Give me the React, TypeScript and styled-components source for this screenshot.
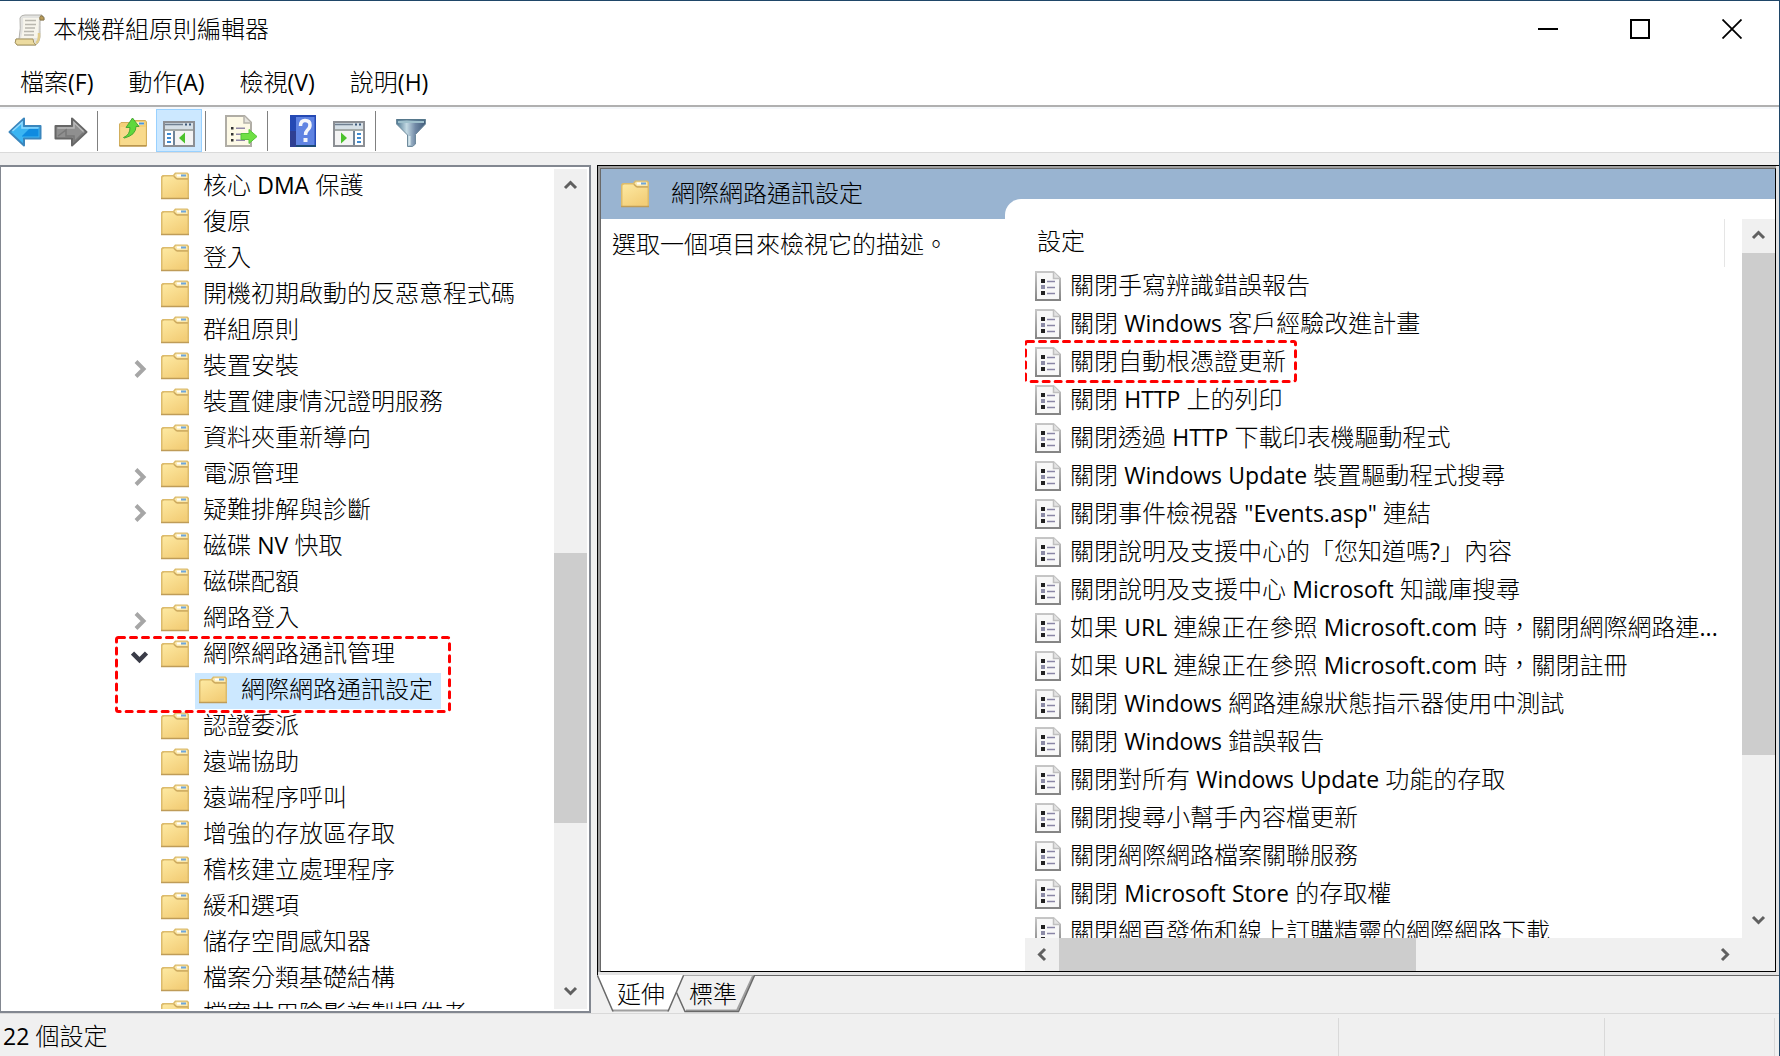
import React from "react";
import styled, { createGlobalStyle, css } from "styled-components";

const Global = createGlobalStyle`
  * { box-sizing: border-box; }
  html, body, #root { height: 100%; }
  body {
    margin: 0;
    font-family: "Open Sans", "Noto Sans CJK TC", sans-serif;
    font-size: 24px;
    line-height: 36px;
    color: #000;
    background: #fff;
    overflow: hidden;
  }
  button {
    font: inherit;
    color: inherit;
    background: none;
    border: 0;
    padding: 0;
    margin: 0;
  }
  ul { list-style: none; margin: 0; padding: 0; }
  h1, h2, p { margin: 0; font: inherit; }
  svg { display: block; flex: none; }
`;

const Window = styled.div`
  height: 100vh;
  display: flex;
  flex-direction: column;
  background: #f0f0f0;
  border-top: 1px solid #1f4668;
  border-right: 1px solid #1f4668;
  font-weight: 300;
`;

const Label = styled.span`
  display: block;
  padding-bottom: 2px;
  white-space: nowrap;
`;

const Latin = styled.span`
  font-size: 23px;
  font-weight: 400;
  line-height: 1;
`;

const TitleBar = styled.header`
  display: flex;
  align-items: center;
  height: 58px;
  padding-left: 14px;
  background: #fff;
`;

const Title = styled.h1`
  flex: 1;
  padding-left: 7px;
`;

const WindowButton = styled.button`
  display: flex;
  align-items: center;
  justify-content: center;
  width: 92px;
  height: 58px;
  padding: 0 3px 2px 0;
`;

const MenuBar = styled.nav`
  display: flex;
  gap: 35px;
  height: 48px;
  padding: 5px 20px 0;
  background: #fff;
  border-bottom: 2px solid #b0b0b0;
`;

const MenuButton = styled.button`
  height: 36px;
`;

const ToolBar = styled.div`
  display: flex;
  align-items: center;
  height: 46px;
  padding-left: 2px;
  background: #fff;
  border-top: 2px solid #f5f8fb;
  border-bottom: 1px solid #dadada;
`;

const ToolButton = styled.button<{ $on?: boolean }>`
  display: flex;
  align-items: flex-end;
  justify-content: center;
  width: 46px;
  height: 43px;
  padding-bottom: 4px;
  border: 1px solid ${(p) => (p.$on ? "#99d1ff" : "transparent")};
  background: ${(p) => (p.$on ? "#cce8ff" : "transparent")};
`;

const ToolSeparator = styled.span`
  width: 1px;
  height: 40px;
  margin: 0 12px 0 3px;
  background: #808080;
`;

const Body = styled.main`
  flex: 1;
  min-height: 0;
  display: grid;
  grid-template-columns: 591px minmax(0, 1fr);
  column-gap: 6px;
  padding-top: 12px;
`;

const TreePane = styled.section`
  display: flex;
  min-height: 0;
  padding: 2px 2px 2px 0;
  background: #fff;
  border: 2px solid #828790;
  border-left-width: 1px;
`;

const TreeList = styled.ul`
  flex: 1;
  min-width: 0;
  overflow: hidden;
`;

const TreeRow = styled.li<{ $child?: boolean }>`
  position: relative;
  display: flex;
  height: 36px;
  padding-left: ${(p) => (p.$child ? 194 : 116)}px;
`;

const Twisty = styled.span`
  display: flex;
  align-items: center;
  justify-content: center;
  width: 44px;
  height: 40px;
  padding-left: 1px;
`;

const TreeItem = styled.button<{ $selected?: boolean }>`
  display: flex;
  align-items: center;
  gap: 14px;
  height: 36px;
  padding-bottom: 2px;
  ${(p) =>
    p.$selected &&
    css`
      padding: 0 8px 2px 4px;
      background: #cce8ff;
    `}
`;

const Highlight = styled.svg<{ $place: "tree" | "list" }>`
  position: absolute;
  z-index: 2;
  pointer-events: none;
  overflow: visible;
  ${(p) =>
    p.$place === "tree"
      ? css`
          left: 114px;
          top: -1px;
          width: 333px;
          height: 74px;
        `
      : css`
          left: -1px;
          top: -3px;
          width: 270px;
          height: 40px;
        `}
`;

const DetailSide = styled.section`
  display: flex;
  flex-direction: column;
  min-width: 0;
  min-height: 0;
`;

const DetailFrame = styled.div`
  flex: 1;
  min-height: 0;
  display: flex;
  border: 1px solid #000;
  border-width: 1px 0 0 1px;
  background: #e3e3e3;
  padding: 0 3px 3px 0;
`;

const DetailInner = styled.div`
  flex: 1;
  min-width: 0;
  display: flex;
  border-style: solid;
  border-width: 2px 0 0 2px;
  border-color: #a0a0a0;
`;

const DetailContent = styled.div`
  flex: 1;
  min-width: 0;
  display: grid;
  grid-template-columns: 424px minmax(0, 1fr);
  grid-template-rows: minmax(0, 1fr);
  background: #fff;
  border: 1px solid;
  border-color: #696969 #000 #000 #696969;
`;

const Description = styled.div`
  display: flex;
  flex-direction: column;
`;

const Banner = styled.div`
  display: flex;
  align-items: center;
  gap: 22px;
  height: 50px;
  margin-right: 20px;
  padding-left: 20px;
  background: #99b4d1;
`;

const DescriptionText = styled.p`
  padding: 7px 11px;
`;

const ListSide = styled.div`
  display: flex;
  flex-direction: column;
  min-height: 0;
`;

const BannerStrip = styled.div`
  flex: none;
  height: 50px;
  margin-left: -20px;
  background: #99b4d1;
  padding-top: 30px;

  &::after {
    content: "";
    display: block;
    height: 20px;
    background: #fff;
    border-top-left-radius: 16px;
  }
`;

const ListScroll = styled.div`
  flex: 1;
  min-height: 0;
  display: grid;
  grid-template-columns: minmax(0, 1fr) 33px;
  grid-template-rows: minmax(0, 1fr) 33px;
`;

const ListView = styled.div`
  overflow: hidden;
`;

const ColumnHeader = styled.div`
  width: 700px;
  height: 48px;
  padding: 4px 12px;
  border-right: 1px solid #e5e5e5;
`;

const SettingRow = styled.li`
  position: relative;
  display: flex;
  height: 38px;
  padding-left: 10px;
`;

const SettingItem = styled.button`
  display: flex;
  align-items: center;
  gap: 9px;
`;

const VBar = styled.div`
  display: flex;
  flex-direction: column;
  width: 33px;
  background: #f0f0f0;
`;

const HBar = styled.div`
  grid-column: 1 / -1;
  display: flex;
  padding: 0 33px 0 1px;
  background: #f0f0f0;
`;

const ScrollButton = styled.button`
  flex: none;
  display: flex;
  align-items: center;
  justify-content: center;
  width: 33px;
  height: 34px;
  padding: 0 2px 2px 0;
`;

const Track = styled.div<{ $dir: "row" | "column" }>`
  flex: 1;
  min-height: 0;
  display: flex;
  flex-direction: ${(p) => p.$dir};
`;

const Space = styled.span<{ $size: number }>`
  flex: ${(p) => p.$size} 0 0;
`;

const Thumb = styled(Space)`
  background: #cdcdcd;
`;

const Tabs = styled.div`
  position: relative;
  flex: none;
  display: flex;
  height: 38px;
  border-top: 1px solid #696969;
  background: #f0f0f0;
`;

const TabShapes = styled.svg`
  position: absolute;
  left: 0;
  top: -1px;
`;

const Tab = styled.button`
  position: relative;
  width: 72px;
  height: 36px;
  padding-left: 16px;
`;

const StatusBar = styled.footer`
  display: flex;
  height: 43px;
  padding: 4px 4px 0 0;
  border-top: 1px solid #d9d9d9;
`;

const StatusCell = styled.div<{ $width?: number }>`
  flex: ${(p) => (p.$width ? `0 0 ${p.$width}px` : "1")};
  padding-left: 3px;
  border-right: 1px solid #d9d9d9;
`;

/* Runs of Latin letters and digits are set a little smaller and heavier than the Han text. */
function Mixed({ text }: { text: string }) {
  return (
    <Label>
      {text.split(/([\x21-\x7e]+)/).map((part, i) => (i % 2 ? <Latin key={i}>{part}</Latin> : part))}
    </Label>
  );
}

function FolderIcon() {
  return (
    <svg width="28" height="28" viewBox="0 0 28 28" aria-hidden="true">
      <defs>
        <linearGradient id="folder" x1="0" y1="0" x2="0.6" y2="1">
          <stop offset="0" stopColor="#fde9a2" />
          <stop offset="1" stopColor="#f3ce78" />
        </linearGradient>
      </defs>
      <path d="M0 27V4.500L1.500 3H12L14 .5H26.500L28 2V27Z" fill="#dcbb6c" />
      <path d="M1.500 26V5.500L3 4.500H12L15 7.500H26.500V26Z" fill="url(#folder)" />
      <path d="M13.500 3.500L15 1.800H25.500L26.500 2.800V6H16Z" fill="#fbe9ae" />
      <path d="M16 2.500H20V4.500H16Z" fill="#fff" />
      <path d="M20 2.500H25V4.500H20Z" fill="#6ea6dc" />
      <path d="M13 4.500L16 7H27" fill="none" stroke="#c9a55c" />
      <path d="M0 26.500H28" stroke="#bf9c58" strokeWidth="1.500" />
    </svg>
  );
}

function SettingIcon() {
  return (
    <svg width="26" height="30" viewBox="0 0 26 30" aria-hidden="true">
      <defs>
        <linearGradient id="edge" x1="0" y1="0" x2="0" y2="1">
          <stop offset="0" stopColor="#c6c6c6" />
          <stop offset="1" stopColor="#858585" />
        </linearGradient>
      </defs>
      <path d="M1 1H18.500L25 7.500V29H1Z" fill="#f8f8f8" stroke="url(#edge)" strokeWidth="2" />
      <path d="M18.500 1V7.500H25" fill="#e4e4e4" stroke="#c0c0c0" strokeWidth="1.500" />
      <path d="M6 8h4v4H6zM6 20h4v4H6z" fill="#222" />
      <path d="M6 14h4v4H6z" fill="#8c8ca6" />
      <path d="M12 10.500h8M12 16.500h8M12 22.500h8" stroke="#8a86a6" strokeWidth="1.500" />
    </svg>
  );
}

function Chevron({ dir }: { dir: "up" | "down" | "left" | "right" }) {
  const d = {
    up: "M4 12L9.500 6.500L15 12",
    down: "M4 6L9.500 11.500L15 6",
    left: "M12 4L6.500 9.500L12 15",
    right: "M6 4L11.500 9.500L6 15",
  }[dir];
  return (
    <svg width="18" height="18" viewBox="0 0 18 18" aria-hidden="true">
      <path d={d} fill="none" stroke="#606060" strokeWidth="3" />
    </svg>
  );
}

function TreeTwisty({ open }: { open: boolean }) {
  return (
    <svg width="18" height="18" viewBox="0 0 18 18" aria-hidden="true">
      {open ? (
        <path d="M1.500 5L8.500 12L15.500 5" fill="none" stroke="#3a3c48" strokeWidth="4.500" />
      ) : (
        <path d="M5 1.500L12.500 9L5 16.500" fill="none" stroke="#a6a6a6" strokeWidth="4" />
      )}
    </svg>
  );
}

function Dashed({ place }: { place: "tree" | "list" }) {
  return (
    <Highlight $place={place} aria-hidden="true">
      <rect x="1.5" y="1.5" width="100%" height="100%" rx="2" fill="none" stroke="#ff0000" strokeWidth="3" strokeDasharray="6 6" strokeLinecap="round" />
    </Highlight>
  );
}

function ScrollIcon() {
  return (
    <svg width="32" height="32" viewBox="0 0 32 32" aria-hidden="true">
      <path d="M6 4Q7 1 11 1H28Q31 3 30 6H26Q26 18 26 23Q25 30 21 31H3Q0 29 2 25H5Q7 14 6 4Z" fill="#e3e3e0" stroke="#b4b3ae" />
      <path d="M9 4H25Q24 15 24 24H7Q10 13 9 4Z" fill="#f7f5ec" />
      <path d="M2 25H19Q19 29 22 31H3Q0 29 2 25Z" fill="#ecdba0" stroke="#a3925c" />
      <path d="M27 1.500Q31 3 30 6H26Q25 3 27 1.500Z" fill="#b99b57" stroke="#8d7a4d" />
      <path d="M11 6.500h11M11 10.500h11M11 14h10M10 17.500h10M10 21h10" stroke="#b9b7ae" strokeWidth="1.500" />
      <path d="M22 29Q25.500 27 25 19" stroke="#e0cc8c" strokeWidth="2.500" fill="none" />
    </svg>
  );
}

function ArrowIcon({ back }: { back?: boolean }) {
  return back ? (
    <svg width="34" height="30" viewBox="0 0 34 30" aria-hidden="true">
      <path d="M1.500 15L16 1.500V9H32.500V21.500H16V28.500Z" fill="#3ab5f2" stroke="#3a86bd" strokeWidth="2" strokeLinejoin="round" />
      <path d="M14 19L22 11H30.500V19.500H14Z" fill="#0e8be0" />
      <path d="M4.500 14L14 5.500V11H30.500" fill="none" stroke="#8edaff" strokeWidth="1.500" />
    </svg>
  ) : (
    <svg width="34" height="30" viewBox="0 0 34 30" aria-hidden="true">
      <path d="M32.500 15L18 1.500V9H1.500V21.500H18V28.500Z" fill="#8f8f8f" stroke="#666" strokeWidth="2" strokeLinejoin="round" />
      <path d="M3.500 11H20V5.500L29.500 14.500" fill="none" stroke="#b9b9b9" strokeWidth="1.500" />
      <path d="M4 19L12 13V19H20V25L29 16" fill="none" stroke="#777" strokeWidth="1.500" />
    </svg>
  );
}

function UpFolderIcon() {
  return (
    <svg width="28" height="30" viewBox="0 0 28 30" aria-hidden="true">
      <path d="M.5 29V7L2 5.500H12L14 3.500H26.500L27.500 5V29Z" fill="#f3cf78" stroke="#d2ae5c" />
      <path d="M1.500 28V10H26.500V28Z" fill="#f8da8c" />
      <path d="M17 5h8v3h-8z" fill="#fff3c8" />
      <path d="M20 5.500h5v2h-5z" fill="#4a94dc" />
      <path d="M.5 28.800H27.500" stroke="#b8944c" strokeWidth="1.500" />
      <path d="M4.500 20.500Q11 18 11 10.500H7L13.500 1L20 9.500H17Q17 18 5.500 21Z" fill="#5fd83c" stroke="#48a832" />
    </svg>
  );
}

function PaneIcon({ flip }: { flip?: boolean }) {
  return (
    <svg width="32" height="26" viewBox="0 0 32 26" aria-hidden="true">
      <path d="M1 1H31V25H1Z" fill="#f4f4f4" stroke="#8c8f94" strokeWidth="2" />
      <path d="M2 2H30V8H2Z" fill="#d5dfe6" />
      <path d="M2 3.500H20" stroke="#6f7f90" strokeWidth="1.500" />
      <path d="M22 3.500h2M26 3.500h2" stroke="#3d5a7c" strokeWidth="2" />
      <path d="M2 9H30" stroke="#a4aaa8" strokeWidth="2" />
      {flip ? (
        <>
          <path d="M22 10H30V24H22Z" fill="#fff" />
          <path d="M21 10V24" stroke="#6f8498" strokeWidth="2" />
          <path d="M24 13h4M24 17h4M24 21h4" stroke="#3f8bd0" strokeWidth="2" />
          <path d="M8 11.500L14 17L8 22.500Z" fill="#4bc22c" />
        </>
      ) : (
        <>
          <path d="M2 10H10V24H2Z" fill="#fff" />
          <path d="M11 10V24" stroke="#6f8498" strokeWidth="2" />
          <path d="M4 13h4M4 17h4M4 21h4" stroke="#3f8bd0" strokeWidth="2" />
          <path d="M22 11.500L16 17L22 22.500Z" fill="#4bc22c" />
        </>
      )}
    </svg>
  );
}

function ExportIcon() {
  return (
    <svg width="33" height="32" viewBox="0 0 33 32" aria-hidden="true">
      <path d="M1 1H19.500L26 7.500V31H1Z" fill="#fdf9e6" stroke="#b0ada5" strokeWidth="2" />
      <path d="M19 1V8H26" fill="#e4e2dc" stroke="#b5b2ab" strokeWidth="1.500" />
      <path d="M6 12h2.500v2.500H6zM6 18h2.500v2.500H6zM6 24h2.500v2.500H6z" fill="#333" />
      <path d="M11 13.200h9M11 19.200h5M11 25.200h9" stroke="#9088a6" strokeWidth="1.500" />
      <path d="M16 18.500H24V14.500L32 21.500L24 28.500V24.500H16Z" fill="#6fe044" stroke="#55c43a" />
    </svg>
  );
}

function HelpIcon() {
  return (
    <svg width="26" height="32" viewBox="0 0 26 32" aria-hidden="true">
      <path d="M0 0H26V32H0Z" fill="#2549b4" />
      <path d="M6 2H24.500V30H6Z" fill="#5f83e2" />
      <path d="M0 16H6V32H0Z" fill="#2f3f92" />
      <path d="M6 30H26V32H6Z" fill="#1d4c78" />
      <path d="M10.500 11Q10.500 5.500 15 5.500Q20 5.500 20 10Q20 13 17.500 15Q15.500 17 15.500 20" fill="none" stroke="#f4f6fb" strokeWidth="3.500" />
      <path d="M13.500 23h4v4h-4z" fill="#f4f6fb" />
    </svg>
  );
}

function FilterIcon() {
  return (
    <svg width="30" height="28" viewBox="0 0 30 28" aria-hidden="true">
      <defs>
        <linearGradient id="funnel" x1="0" y1="0" x2="1" y2="0">
          <stop offset="0" stopColor="#4b7590" />
          <stop offset="0.35" stopColor="#c4dae4" />
          <stop offset="0.65" stopColor="#7189a6" />
          <stop offset="1" stopColor="#3f5a78" />
        </linearGradient>
      </defs>
      <path d="M.5 .5H29.500V5L19.500 15.500V25L16.500 27.500H11.500V16L.5 5Z" fill="url(#funnel)" stroke="#6f8b9c" />
      <path d="M2 3H28" stroke="#9fc0cc" strokeWidth="2" />
      <path d="M.5 .8H29.500" stroke="#55788c" strokeWidth="1.500" />
      <path d="M13.500 17V26" stroke="#d5e6ec" strokeWidth="2" />
    </svg>
  );
}

type Node = { name: string; state?: "closed" | "open"; child?: boolean };

const nodes: Node[] = [
  { name: "核心 DMA 保護" },
  { name: "復原" },
  { name: "登入" },
  { name: "開機初期啟動的反惡意程式碼" },
  { name: "群組原則" },
  { name: "裝置安裝", state: "closed" },
  { name: "裝置健康情況證明服務" },
  { name: "資料夾重新導向" },
  { name: "電源管理", state: "closed" },
  { name: "疑難排解與診斷", state: "closed" },
  { name: "磁碟 NV 快取" },
  { name: "磁碟配額" },
  { name: "網路登入", state: "closed" },
  { name: "網際網路通訊管理", state: "open" },
  { name: "網際網路通訊設定", child: true },
  { name: "認證委派" },
  { name: "遠端協助" },
  { name: "遠端程序呼叫" },
  { name: "增強的存放區存取" },
  { name: "稽核建立處理程序" },
  { name: "緩和選項" },
  { name: "儲存空間感知器" },
  { name: "檔案分類基礎結構" },
  { name: "檔案共用陰影複製提供者" },
];

const settings = [
  "關閉手寫辨識錯誤報告",
  "關閉 Windows 客戶經驗改進計畫",
  "關閉自動根憑證更新",
  "關閉 HTTP 上的列印",
  "關閉透過 HTTP 下載印表機驅動程式",
  "關閉 Windows Update 裝置驅動程式搜尋",
  "關閉事件檢視器 \"Events.asp\" 連結",
  "關閉說明及支援中心的「您知道嗎?」內容",
  "關閉說明及支援中心 Microsoft 知識庫搜尋",
  "如果 URL 連線正在參照 Microsoft.com 時，關閉網際網路連...",
  "如果 URL 連線正在參照 Microsoft.com 時，關閉註冊",
  "關閉 Windows 網路連線狀態指示器使用中測試",
  "關閉 Windows 錯誤報告",
  "關閉對所有 Windows Update 功能的存取",
  "關閉搜尋小幫手內容檔更新",
  "關閉網際網路檔案關聯服務",
  "關閉 Microsoft Store 的存取權",
  "關閉網頁發佈和線上訂購精靈的網際網路下載",
];

export default function App() {
  return (
    <Window lang="zh-Hant">
      <Global />
      <TitleBar>
        <ScrollIcon />
        <Title><Mixed text="本機群組原則編輯器" /></Title>
        <WindowButton aria-label="最小化">
          <svg width="20" height="20" viewBox="0 0 20 20"><path d="M0 10H20" stroke="#000" strokeWidth="2" /></svg>
        </WindowButton>
        <WindowButton aria-label="最大化">
          <svg width="20" height="20" viewBox="0 0 20 20"><path d="M1 1H19V19H1Z" fill="none" stroke="#000" strokeWidth="2" /></svg>
        </WindowButton>
        <WindowButton aria-label="關閉">
          <svg width="20" height="20" viewBox="0 0 20 20"><path d="M.5 .5L19.500 19.500M19.500 .5L.5 19.500" stroke="#000" strokeWidth="1.800" /></svg>
        </WindowButton>
      </TitleBar>
      <MenuBar>
        {["檔案(F)", "動作(A)", "檢視(V)", "說明(H)"].map((m) => (
          <MenuButton key={m}><Mixed text={m} /></MenuButton>
        ))}
      </MenuBar>
      <ToolBar>
        <ToolButton aria-label="上一頁"><ArrowIcon back /></ToolButton>
        <ToolButton aria-label="下一頁"><ArrowIcon /></ToolButton>
        <ToolSeparator />
        <ToolButton aria-label="上一層"><UpFolderIcon /></ToolButton>
        <ToolButton $on aria-label="顯示樹狀目錄"><PaneIcon /></ToolButton>
        <ToolSeparator />
        <ToolButton aria-label="匯出清單"><ExportIcon /></ToolButton>
        <ToolSeparator />
        <ToolButton aria-label="說明"><HelpIcon /></ToolButton>
        <ToolButton aria-label="顯示動作窗格"><PaneIcon flip /></ToolButton>
        <ToolSeparator />
        <ToolButton aria-label="篩選"><FilterIcon /></ToolButton>
      </ToolBar>
      <Body>
        <TreePane>
          <TreeList>
            {nodes.map((n) => (
              <TreeRow key={n.name} $child={n.child}>
                {!n.child && <Twisty>{n.state && <TreeTwisty open={n.state === "open"} />}</Twisty>}
                <TreeItem $selected={n.child}>
                  <FolderIcon />
                  <Mixed text={n.name} />
                </TreeItem>
                {n.state === "open" && <Dashed place="tree" />}
              </TreeRow>
            ))}
          </TreeList>
          <VBar>
            <ScrollButton aria-label="向上捲動"><Chevron dir="up" /></ScrollButton>
            <Track $dir="column">
              <Space $size={350} />
              <Thumb $size={270} />
              <Space $size={152} />
            </Track>
            <ScrollButton aria-label="向下捲動"><Chevron dir="down" /></ScrollButton>
          </VBar>
        </TreePane>
        <DetailSide>
          <DetailFrame>
            <DetailInner>
              <DetailContent>
                <Description>
                  <Banner>
                    <FolderIcon />
                    <h2><Mixed text="網際網路通訊設定" /></h2>
                  </Banner>
                  <DescriptionText>選取一個項目來檢視它的描述。</DescriptionText>
                </Description>
                <ListSide>
                  <BannerStrip />
                  <ListScroll>
                    <ListView>
                      <ColumnHeader>設定</ColumnHeader>
                      <ul>
                        {settings.map((s, i) => (
                          <SettingRow key={s}>
                            <SettingItem>
                              <SettingIcon />
                              <Mixed text={s} />
                            </SettingItem>
                            {i === 2 && <Dashed place="list" />}
                          </SettingRow>
                        ))}
                      </ul>
                    </ListView>
                    <VBar>
                      <ScrollButton aria-label="向上捲動"><Chevron dir="up" /></ScrollButton>
                      <Track $dir="column">
                        <Thumb $size={502} />
                        <Space $size={149} />
                      </Track>
                      <ScrollButton aria-label="向下捲動"><Chevron dir="down" /></ScrollButton>
                    </VBar>
                    <HBar>
                      <ScrollButton aria-label="向左捲動"><Chevron dir="left" /></ScrollButton>
                      <Track $dir="row">
                        <Thumb $size={356} />
                        <Space $size={292} />
                      </Track>
                      <ScrollButton aria-label="向右捲動"><Chevron dir="right" /></ScrollButton>
                    </HBar>
                  </ListScroll>
                </ListSide>
              </DetailContent>
            </DetailInner>
          </DetailFrame>
          <Tabs>
            <TabShapes width="160" height="38" viewBox="0 0 160 38" aria-hidden="true">
              <path d="M79.500 18L87 .5H157L141 36.500H88Z" fill="#f0f0f0" />
              <path d="M156 1L140 35.500H89" fill="none" stroke="#a0a0a0" strokeWidth="2" />
              <path d="M79.500 17.500L88 36.500H141.500L157.500 .5" fill="none" stroke="#696969" strokeWidth="1.500" />
              <path d="M.5 0L16 36H71L86.500 0Z" fill="#fff" />
              <path d="M16 35.500H71" stroke="#a0a0a0" strokeWidth="2" />
              <path d="M.5 .5L16 36.500M71 36.500L86.500 .5" fill="none" stroke="#696969" strokeWidth="1.500" />
            </TabShapes>
            <Tab>延伸</Tab>
            <Tab>標準</Tab>
          </Tabs>
        </DetailSide>
      </Body>
      <StatusBar>
        <StatusCell><Mixed text="22 個設定" /></StatusCell>
        <StatusCell $width={266} />
        <StatusCell $width={170} />
      </StatusBar>
    </Window>
  );
}
